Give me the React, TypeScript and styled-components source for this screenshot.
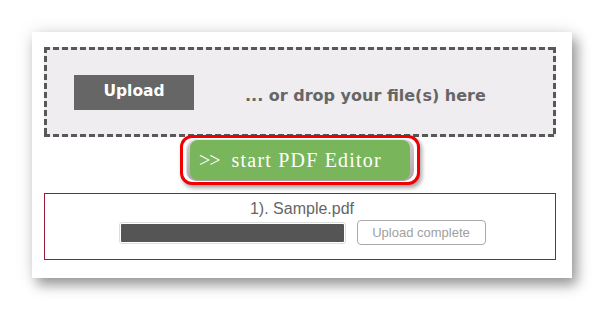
import React from "react";
import styled, { createGlobalStyle } from "styled-components";

const Global = createGlobalStyle`
  html, body { margin: 0; padding: 0; background: #ffffff; }
  body { width: 604px; height: 310px; overflow: hidden; }
`;

const Page = styled.div`
  padding: 32px 0 0 32px;
`;

const Card = styled.div`
  width: 540px;
  height: 246px;
  box-sizing: border-box;
  background: #ffffff;
  padding: 15px 16px 0 12px;
  box-shadow: 5px 7px 12px rgba(0, 0, 0, 0.38), 0 0 18px rgba(0, 0, 0, 0.1);
  display: flex;
  flex-direction: column;
  align-items: stretch;
`;

const dash = "#585858";

const DropZone = styled.div`
  height: 90px;
  box-sizing: border-box;
  display: flex;
  align-items: center;
  padding-left: 30px;
  background:
    repeating-linear-gradient(90deg, ${dash} 0 6px, transparent 6px 9px) left top / 100% 3px no-repeat,
    repeating-linear-gradient(90deg, ${dash} 0 6px, transparent 6px 9px) left bottom / 100% 3px no-repeat,
    repeating-linear-gradient(180deg, ${dash} 0 6px, transparent 6px 9px) left top / 3px 100% no-repeat,
    repeating-linear-gradient(180deg, ${dash} 0 6px, transparent 6px 9px) right top / 3px 100% no-repeat,
    #efedf0;
`;

const UploadButton = styled.div`
  width: 120px;
  height: 35px;
  background: #666666;
  color: #ffffff;
  font-family: "DejaVu Sans", Verdana, sans-serif;
  font-weight: bold;
  font-size: 15.5px;
  display: flex;
  align-items: center;
  justify-content: center;
  padding-bottom: 2px;
  box-sizing: border-box;
`;

const DropText = styled.div`
  margin-left: 51px;
  padding-top: 7px;
  color: #666666;
  font-family: "DejaVu Sans", Verdana, sans-serif;
  font-weight: bold;
  font-size: 16px;
  white-space: nowrap;
`;

const StartRow = styled.div`
  display: flex;
  justify-content: center;
  margin-top: -2px;
  position: relative;
`;

const RedRing = styled.div`
  border: 3px solid #f00000;
  border-radius: 12px;
  background: #ffffff;
  padding: 1px 3px;
  box-shadow: 2px 3px 4px rgba(0, 0, 0, 0.35);
`;

const Bezel = styled.div`
  border-radius: 10px;
  padding: 1px 4px;
  background: linear-gradient(180deg, #d0d0d0 0%, #a8a8a8 100%);
  box-shadow: inset 1px 1px 1px rgba(255, 255, 255, 0.6);
`;

const GreenButton = styled.div`
  width: 220px;
  height: 40px;
  box-sizing: border-box;
  background: #79b55b;
  border-radius: 8px;
  color: #ffffff;
  font-family: "Liberation Serif", "Times New Roman", serif;
  font-size: 20px;
  letter-spacing: 1.2px;
  display: flex;
  align-items: center;
  padding-left: 9px;
  white-space: pre;
`;

const Arrows = styled.span`
  font-size: 20px;
  letter-spacing: -1px;
  margin-right: 12px;
`;

const FileBox = styled.div`
  margin-top: 8px;
  height: 67px;
  box-sizing: border-box;
  border: 1px solid #9b1c3a;
  display: flex;
  flex-direction: column;
  align-items: center;
  padding-top: 6px;
`;

const FileName = styled.div`
  font-family: "Liberation Sans", Arial, sans-serif;
  font-size: 16px;
  line-height: 18px;
  color: #666666;
  margin-left: 4px;
`;

const ProgressRow = styled.div`
  display: flex;
  align-items: center;
  gap: 11px;
  margin-top: 2px;
  margin-left: 4px;
`;

const ProgressTrack = styled.div`
  width: 227px;
  height: 22px;
  box-sizing: border-box;
  border: 1px solid #dddddd;
  border-radius: 3px;
  background: #ffffff;
  padding: 1px;
`;

const ProgressFill = styled.div`
  height: 100%;
  background: #555555;
  border-radius: 1px;
`;

const StatusButton = styled.div`
  width: 129px;
  height: 25px;
  box-sizing: border-box;
  border: 1px solid #aaaaaa;
  border-radius: 4px;
  background: #ffffff;
  color: #a0a0a0;
  font-family: "Liberation Sans", Arial, sans-serif;
  font-size: 13px;
  display: flex;
  align-items: center;
  justify-content: center;
`;

export default function App() {
  const progress = 100;
  return (
    <>
      <Global />
      <Page>
        <Card>
          <DropZone>
            <UploadButton>Upload</UploadButton>
            <DropText>... or drop your file(s) here</DropText>
          </DropZone>
          <StartRow>
            <RedRing>
              <Bezel>
                <GreenButton>
                  <Arrows>&gt;&gt;</Arrows>start PDF Editor
                </GreenButton>
              </Bezel>
            </RedRing>
          </StartRow>
          <FileBox>
            <FileName>1). Sample.pdf</FileName>
            <ProgressRow>
              <ProgressTrack>
                <ProgressFill style={{ width: `${progress}%` }} />
              </ProgressTrack>
              <StatusButton>Upload complete</StatusButton>
            </ProgressRow>
          </FileBox>
        </Card>
      </Page>
    </>
  );
}
